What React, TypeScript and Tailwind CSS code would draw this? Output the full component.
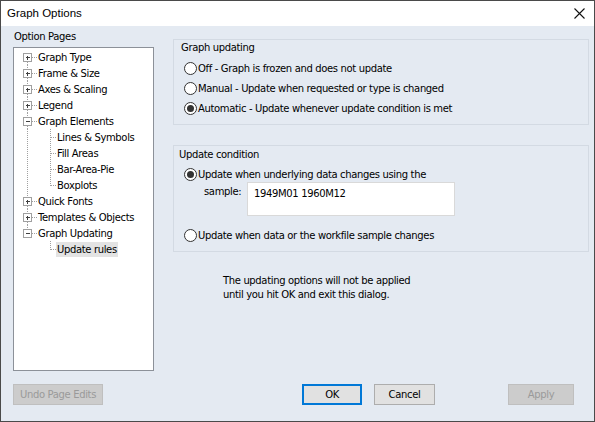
import React from 'react';

type TreeRow = {
  label: string;
  level: 0 | 1;
  expander?: 'plus' | 'minus';
  lineAbove?: boolean;
  lineBelow?: boolean;
  rootLine?: boolean;
  lastChild?: boolean;
  selected?: boolean;
};

const rows: TreeRow[] = [
  { label: 'Graph Type', level: 0, expander: 'plus', lineBelow: true },
  { label: 'Frame & Size', level: 0, expander: 'plus', lineAbove: true, lineBelow: true },
  { label: 'Axes & Scaling', level: 0, expander: 'plus', lineAbove: true, lineBelow: true },
  { label: 'Legend', level: 0, expander: 'plus', lineAbove: true, lineBelow: true },
  { label: 'Graph Elements', level: 0, expander: 'minus', lineAbove: true, lineBelow: true },
  { label: 'Lines & Symbols', level: 1, rootLine: true },
  { label: 'Fill Areas', level: 1, rootLine: true },
  { label: 'Bar-Area-Pie', level: 1, rootLine: true },
  { label: 'Boxplots', level: 1, rootLine: true, lastChild: true },
  { label: 'Quick Fonts', level: 0, expander: 'plus', lineAbove: true, lineBelow: true },
  { label: 'Templates & Objects', level: 0, expander: 'plus', lineAbove: true, lineBelow: true },
  { label: 'Graph Updating', level: 0, expander: 'minus', lineAbove: true },
  { label: 'Update rules', level: 1, lastChild: true, selected: true },
];

const dot = { stroke: '#a0a0a0', strokeWidth: 1, strokeDasharray: '1 1' };

const TreeLines: React.FC<{ row: TreeRow }> = ({ row }) => {
  const w = row.level === 0 ? 23 : 42;
  return (
    <svg width={w} height={16} className="shrink-0" shapeRendering="crispEdges">
      {row.level === 0 && (
        <>
          {row.lineAbove && <line x1={13.5} y1={0} x2={13.5} y2={4} {...dot} />}
          {row.lineBelow && <line x1={13.5} y1={13} x2={13.5} y2={16} {...dot} />}
          <line x1={18} y1={8.5} x2={23} y2={8.5} {...dot} />
          <rect x={9.5} y={4.5} width={8} height={8} fill="#fff" stroke="#a0a0a0" />
          <line x1={11.5} y1={8.5} x2={16} y2={8.5} stroke="#404040" />
          {row.expander === 'plus' && <line x1={13.5} y1={6.5} x2={13.5} y2={11} stroke="#404040" />}
        </>
      )}
      {row.level === 1 && (
        <>
          {row.rootLine && <line x1={13.5} y1={0} x2={13.5} y2={16} {...dot} />}
          <line x1={36.5} y1={0} x2={36.5} y2={row.lastChild ? 9 : 16} {...dot} />
          <line x1={37} y1={8.5} x2={42} y2={8.5} {...dot} />
        </>
      )}
    </svg>
  );
};

const Radio: React.FC<{ checked?: boolean }> = ({ checked }) => (
  <span className="w-[13px] h-[13px] rounded-full border border-[#333333] bg-white flex items-center justify-center shrink-0">
    {checked && <span className="w-[7px] h-[7px] rounded-full bg-[#333333]" />}
  </span>
);

const RadioRow: React.FC<{ checked?: boolean; children: React.ReactNode }> = ({ checked, children }) => (
  <div className="flex items-center gap-[1px] h-[20px]">
    <Radio checked={checked} />
    <span>{children}</span>
  </div>
);

const App: React.FC = () => {
  return (
    <div
      className="w-[595px] h-[422px] bg-[#e4eaf2] border border-[#4a4a4a] flex flex-col text-[10px] tracking-[-0.35px] text-black overflow-hidden"
      style={{ fontFamily: '"DejaVu Sans", Verdana, sans-serif' }}
    >
      <div className="h-[25px] bg-white flex items-center justify-between pl-[6px] pr-[9px] shrink-0">
        <span className="text-[11.5px] tracking-normal" style={{ fontFamily: '"Liberation Sans", Arial, sans-serif' }}>Graph Options</span>
        <svg width="11" height="11" viewBox="0 0 11 11">
          <path d="M0.5 0.5 L10.5 10.5 M10.5 0.5 L0.5 10.5" stroke="#111" strokeWidth="1.1" />
        </svg>
      </div>

      <div className="flex flex-1 pl-[12px] pr-[5px]">
        <div className="w-[141px] flex flex-col">
          <div className="h-[21px] pt-[4px] leading-[14px] pl-[1px]">Option Pages</div>
          <div className="h-[324px] bg-white border border-[#8c9199] pt-[1px]">
            {rows.map((r) => (
              <div key={r.label} className="flex items-center h-[16px]">
                <TreeLines row={r} />
                <span className={r.selected ? 'bg-[#e3e3e3] px-[1px] leading-[15px]' : 'px-[1px]'}>{r.label}</span>
              </div>
            ))}
          </div>
        </div>

        <div className="flex-1 ml-[19px] flex flex-col">
          <div className="mt-[13px] border border-[#d3dae3] pl-[7px] pt-[1px] h-[86px]">
            <div className="leading-[14px] mb-[3px]">Graph updating</div>
            <div className="pl-[3px] flex flex-col">
              <RadioRow>Off - Graph is frozen and does not update</RadioRow>
              <RadioRow>Manual - Update when requested or type is changed</RadioRow>
              <RadioRow checked>Automatic - Update whenever update condition is met</RadioRow>
            </div>
          </div>

          <div className="mt-[20px] border border-[#d3dae3] pl-[5px] pt-[2px] h-[107px]">
            <div className="leading-[14px] mb-[2px]">Update condition</div>
            <div className="pl-[5px]">
              <RadioRow checked>Update when underlying data changes using the</RadioRow>
              <div className="flex items-start mt-[-2px]">
                <span className="ml-[20px] w-[43px] pt-[2px]">sample:</span>
                <div className="w-[208px] h-[34px] bg-white border border-[#d9d9d9] px-[6px] pt-[3px]">1949M01 1960M12</div>
              </div>
              <div className="mt-[9px]">
                <RadioRow>Update when data or the workfile sample changes</RadioRow>
              </div>
            </div>
          </div>

          <div className="mt-[22px] ml-[50px] leading-[14px]">
            <div>The updating options will not be applied</div>
            <div>until you hit OK and exit this dialog.</div>
          </div>
        </div>
      </div>

      <div className="h-[51px] flex items-start pt-[13px] pl-[12px] pr-[20px] shrink-0">
        <div className="w-[90px] h-[21px] bg-[#cccccc] border border-[#bfbfbf] text-[#9a9a9a] flex items-center justify-center">Undo Page Edits</div>
        <div className="flex-1" />
        <div className="w-[60px] h-[21px] bg-[#e1e1e1] border-2 border-[#0078d7] flex items-center justify-center">OK</div>
        <div className="w-[61px] h-[21px] ml-[12px] bg-[#e1e1e1] border border-[#adadad] flex items-center justify-center">Cancel</div>
        <div className="w-[66px] h-[21px] ml-[73px] bg-[#cccccc] border border-[#bfbfbf] text-[#9a9a9a] flex items-center justify-center">Apply</div>
      </div>
    </div>
  );
};

export default App;
